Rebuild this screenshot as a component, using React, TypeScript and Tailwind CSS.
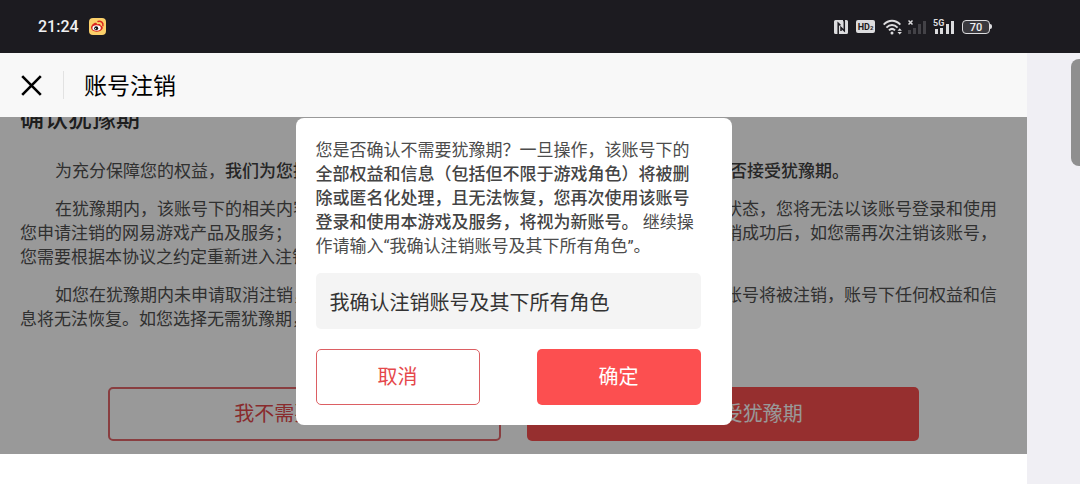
import React, { useState } from 'react';

interface AgreementLine {
  start: string;
  end?: string;
  indent?: boolean;
}

// Each paragraph is a list of visual lines; start hugs the left edge, end hugs the right.
const paragraphs: AgreementLine[][] = [
  [
    { start: '在犹豫期内，该账号下的相关内容', end: '状态，您将无法以该账号登录和使用', indent: true },
    { start: '您申请注销的网易游戏产品及服务；', end: '销成功后，如您需再次注销该账号，' },
    { start: '您需要根据本协议之约定重新进入注销' },
  ],
  [
    { start: '如您在犹豫期内未申请取消注销，', end: '账号将被注销，账号下任何权益和信', indent: true },
    { start: '息将无法恢复。如您选择无需犹豫期，' },
  ],
];

const NfcIcon = () => (
  <svg width="14" height="14" viewBox="0 0 14 14" aria-hidden="true">
    <path d="M1.5 0H9v1.200h1V0h2.500A1.500 1.500 0 0 1 14 1.500v11a1.500 1.500 0 0 1-1.500 1.500h-11A1.500 1.500 0 0 1 0 12.500v-11A1.500 1.500 0 0 1 1.500 0z" fill="#dcdcde" />
    <path d="M4.200 14V3.200L6.400 5.400M10.300 0v10.800L7 7.600V11" fill="none" stroke="#1c1b20" strokeWidth="1.500" />
  </svg>
);

const WifiIcon = () => (
  <svg width="20" height="16" viewBox="0 0 20 16" fill="none" stroke="#dcdcde" strokeWidth="2" aria-hidden="true">
    <path d="M.7 5.600C5.600.400 12.400.400 17.300 5.600" />
    <path d="M3.400 8.600C6.800 5.200 11.200 5.200 14.600 8.600" />
    <path d="M6 11.400C7.800 9.600 10.200 9.600 12 11.400" />
    <circle cx="9" cy="14" r="1.500" fill="#dcdcde" stroke="none" />
    <path d="M14.500 11.800l2.200-2.600 2.200 2.600zM14.500 13l2.200 2.600 2.200-2.600z" fill="#dcdcde" stroke="none" />
  </svg>
);

const NoSignalIcon = () => (
  <svg width="20" height="16" viewBox="0 0 20 16" aria-hidden="true">
    <path d="M.5 1.500l4 4M4.500 1.500l-4 4" stroke="#dcdcde" strokeWidth="1.500" />
    <path d="M0 11h3v4H0zM5 9h3v6H5zM10 5h3v10h-3zM15 2h3v13h-3z" fill="#434247" />
  </svg>
);

const SignalIcon = () => (
  <svg width="22" height="16" viewBox="0 0 22 16" fill="#dcdcde" aria-hidden="true">
    <path d="M2 10h3v5H2zM7 9h3v6H7zM13 5h3v10h-3zM18 2h3v13h-3z" />
    <text x="0" y="7" fontFamily="Roboto, sans-serif" fontSize="9" fontWeight="700">5G</text>
  </svg>
);

const WeiboIcon = () => (
  <svg width="17" height="17" viewBox="0 0 17 17" aria-hidden="true">
    <rect width="17" height="17" rx="4" fill="#fbd06a" />
    <path d="M2 9.800C2 7 5.500 4 7.400 4.900c.6.300.6.900.5 1.500 2.200-.8 4-.4 3.700 1.200 2 .6 2.600 2 2 3.200-1 2.100-3.800 3-6.200 2.900C4.300 13.600 2 12.200 2 9.800z" fill="#d9281f" />
    <ellipse cx="7.600" cy="10" rx="4.200" ry="2.800" fill="#fff" />
    <circle cx="7.200" cy="10.200" r="2" fill="#111" />
    <circle cx="6.600" cy="10.700" r=".6" fill="#fff" />
    <path d="M9 3.400c2.900-.7 5.500 1.200 4.900 4.300" fill="none" stroke="#d9281f" strokeWidth="1.500" strokeLinecap="round" />
  </svg>
);

const StatusBar = () => (
  <div className="flex h-[53px] items-center justify-between bg-[#1c1b20] pr-[88px] pl-[38px] text-[#f0f0f2]">
    <div className="flex items-center gap-[10px]">
      <span className="text-base font-medium">21:24</span>
      <WeiboIcon />
    </div>
    <div className="flex items-center gap-[5px]">
      <div className="flex items-center gap-2">
        <NfcIcon />
        <span className="flex h-[13px] w-[19px] items-center justify-center rounded-[2px] bg-[#dcdcde] pt-px text-[9px] leading-none font-bold text-[#1c1b20]">
          HD<span className="pt-[2px] text-[6px]">2</span>
        </span>
        <WifiIcon />
      </div>
      <NoSignalIcon />
      <SignalIcon />
      <div className="ml-[2px] flex items-center">
        <span className="flex h-[14px] w-[28px] items-center justify-center rounded-[4px] border border-[#dcdcde] bg-[#3a393e] pt-px text-[11px] leading-none font-medium">
          70
        </span>
        <span className="h-[5px] w-[2px] rounded-r-full bg-[#dcdcde]"></span>
      </div>
    </div>
  </div>
);

const Line: React.FC<AgreementLine> = ({ start, end, indent }) => (
  <span className={`flex justify-between whitespace-nowrap ${indent ? 'pl-[35px]' : ''}`}>
    <span>{start}</span>
    {end && <span>{end}</span>}
  </span>
);

const ConfirmDialog = () => {
  const [value, setValue] = useState('我确认注销账号及其下所有角色');

  return (
    <div role="dialog" aria-modal="true" className="w-[436px] rounded-lg bg-white py-5 pr-[31px] pl-5">
      <p className="text-[17px] leading-[24px] text-[#4c4c4c]">
        您是否确认不需要犹豫期？一旦操作，该账号下的
        <strong className="font-medium text-[#444]">
          全部权益和信息（包括但不限于游戏角色）将被删除或匿名化处理，且无法恢复，您再次使用该账号登录和使用本游戏及服务，将视为新账号。
        </strong>{' '}
        继续操作请输入“我确认注销账号及其下所有角色”。
      </p>
      <input
        type="text"
        aria-label="确认内容"
        value={value}
        onChange={(e) => setValue(e.target.value)}
        className="mt-[15px] h-14 w-full rounded-[5px] bg-[#f4f4f4] px-[14px] text-xl text-[#333] outline-none"
      />
      <div className="mt-5 flex justify-between">
        <button className="h-14 w-[164px] rounded-[5px] border border-[#dc5f63] text-xl text-[#e5484b]">取消</button>
        <button className="h-14 w-[164px] rounded-[5px] bg-[#fc4f50] text-xl text-white">确定</button>
      </div>
    </div>
  );
};

export default function App() {
  return (
    <div className="flex min-h-screen flex-col bg-[#f0eff4] font-[Roboto,'Noto_Sans_CJK_SC',sans-serif]">
      <StatusBar />
      <div className="flex flex-1">
        <main className="min-w-0 flex-1 bg-white">
          <header className="flex h-16 items-center bg-[#f8f8f8] pl-[21px]">
            <button aria-label="关闭">
              <svg width="21" height="21" viewBox="0 0 21 21" stroke="#000" strokeWidth="2.600" aria-hidden="true">
                <path d="M1.200 1.200l18.600 18.600M19.800 1.200L1.200 19.800" />
              </svg>
            </button>
            <span className="ml-[21px] h-7 w-px bg-[#e2e2e2]"></span>
            <h1 className="ml-5 pt-1 text-[23px] text-black">账号注销</h1>
          </header>

          <div className="relative overflow-hidden">
            <article className="pr-[30px] pl-5 text-[17px] leading-[24px] text-[#505050]">
              <h2 className="-mt-[14px] text-2xl font-medium text-[#333]">确认犹豫期</h2>
              <p className="mt-6 flex justify-between pr-[148px] pl-[35px] whitespace-nowrap">
                <span>
                  为充分保障您的权益，<strong className="font-medium text-[#404040]">我们为您提供</strong>
                </span>
                <strong className="font-medium text-[#404040]">是否接受犹豫期。</strong>
              </p>
              {paragraphs.map((lines, i) => (
                <p key={i} className="mt-[14px]">
                  {lines.map((line) => (
                    <Line key={line.start} {...line} />
                  ))}
                </p>
              ))}
            </article>
            <div className="mt-14 grid grid-cols-2 gap-[26px] px-[108px] pb-[13px] text-xl">
              <button className="h-[54px] rounded-[5px] border-2 border-[#e5686b] text-[#e5484b]">我不需要犹豫期</button>
              <button className="h-[54px] rounded-[5px] bg-[#fb4f4f] text-white">我需要接受犹豫期</button>
            </div>

            <div className="absolute inset-0 flex items-start justify-center bg-black/40 pt-px">
              <ConfirmDialog />
            </div>
          </div>
        </main>

        <aside className="flex w-[53px] justify-end pt-[6px]">
          <div className="h-[107px] w-[9px] rounded-l-lg bg-[#8f8f8f]"></div>
        </aside>
      </div>
    </div>
  );
}
